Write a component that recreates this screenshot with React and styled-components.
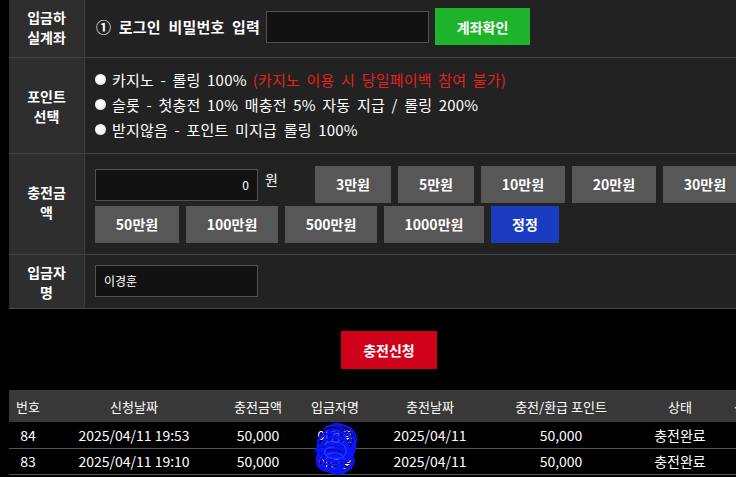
import React from "react";
import styled, { createGlobalStyle } from "styled-components";

const Global = createGlobalStyle`
  html, body {
    margin: 0;
    padding: 0;
    background: #000;
    overflow: hidden;
  }
  body {
    font-family: "Noto Sans CJK KR", "Noto Sans", sans-serif;
    color: #fff;
  }
  * { box-sizing: border-box; }
`;

const Page = styled.div`
  width: 769px;
  padding-left: 9px;
`;

const FormTable = styled.div`
  display: flex;
  flex-direction: column;
  border-bottom: 1px solid #4a4a4a;
`;

const Row = styled.div`
  display: grid;
  grid-template-columns: 76px 1fr;
  height: ${(p) => p.$h}px;
  border-top: ${(p) => (p.$first ? "none" : "1px solid #444")};
`;

const Label = styled.div`
  background: #2e2e2e;
  border-right: 1px solid #3c3c3c;
  display: flex;
  align-items: center;
  justify-content: center;
  text-align: center;
  font-size: 14px;
  font-weight: 700;
  line-height: 20px;
  padding-bottom: ${(p) => p.$pb || 0}px;
`;

const Cell = styled.div`
  background: #222;
  padding: ${(p) => p.$pad || "0 0 0 10px"};
  display: flex;
  align-items: center;
`;

const Inline = styled.div`
  display: flex;
  align-items: center;
  gap: ${(p) => p.$gap || 6}px;
`;

const Strong = styled.span`
  font-size: 15px;
  font-weight: 700;
  word-spacing: 4px;
  letter-spacing: 0.2px;
  white-space: nowrap;
`;

const TextInput = styled.input`
  width: 163px;
  height: 32px;
  background: #121212;
  border: 1px solid #515151;
  color: #fff;
  font-family: inherit;
  font-size: 12px;
  padding: 0 8px;
  text-align: ${(p) => p.$align || "left"};
  outline: none;
`;

const Button = styled.button`
  width: ${(p) => p.$w}px;
  height: ${(p) => p.$h || 37}px;
  padding: 0;
  border: none;
  border-radius: 0;
  background: ${(p) => p.$bg || "#575757"};
  color: #fff;
  font-family: inherit;
  font-size: 14px;
  font-weight: 700;
  white-space: nowrap;
  cursor: pointer;
`;

const Options = styled.div`
  display: flex;
  flex-direction: column;
  gap: 4px;
`;

const Option = styled.label`
  display: flex;
  align-items: center;
  gap: 6px;
  font-size: 15px;
  line-height: 21px;
  word-spacing: 3px;
  letter-spacing: 0.2px;
  white-space: nowrap;
`;

const RadioDot = styled.span`
  width: 11px;
  height: 11px;
  border-radius: 50%;
  background: radial-gradient(circle at 45% 40%, #fff 0%, #f2f2f2 55%, #bdbdbd 100%);
  flex: none;
`;

const Warn = styled.span`
  color: #e4211d;
`;

const AmountGrid = styled.div`
  width: 660px;
  display: flex;
  flex-wrap: wrap;
  column-gap: 7px;
  row-gap: 3px;
  align-items: center;
`;

const AmountField = styled.div`
  display: flex;
  align-items: flex-start;
  gap: 7px;
  margin-right: 30px;
  height: 37px;
  padding-top: 3px;
`;

const Won = styled.span`
  font-size: 14px;
  line-height: 20px;
`;

const SubmitBar = styled.div`
  display: flex;
  justify-content: center;
  padding: 22px 0 21px;
`;

const History = styled.table`
  width: 760px;
  border-collapse: collapse;
  table-layout: fixed;
`;

const Th = styled.th`
  background: #383838;
  height: 32px;
  font-size: 13px;
  font-weight: 400;
  color: #fff;
  text-align: center;
  white-space: nowrap;
  padding: 0;
`;

const Td = styled.td`
  height: 26px;
  font-size: 14px;
  color: #fff;
  text-align: center;
  white-space: nowrap;
  border-bottom: 1px solid #555;
  padding: 0;
  position: relative;
`;

const Name = styled.span`
  color: #fff;
  font-size: 13px;
`;

const Scribble = styled.svg`
  position: absolute;
  left: 17px;
  top: -1px;
  width: 46px;
  height: 56px;
  z-index: 2;
  pointer-events: none;
`;

const widths = [38, 174, 74, 80, 110, 152, 86, 46];
const heads = ["번호", "신청날짜", "충전금액", "입금자명", "충전날짜", "충전/환급 포인트", "상태", "상세"];
const rows = [
  { no: 84, req: "2025/04/11 19:53", amt: "50,000", name: "이경훈", day: "2025/04/11", pt: "50,000", st: "충전완료" },
  { no: 83, req: "2025/04/11 19:10", amt: "50,000", name: "이경훈", day: "2025/04/11", pt: "50,000", st: "충전완료" },
];

const amounts = [
  { t: "3만원", w: 76 },
  { t: "5만원", w: 76 },
  { t: "10만원", w: 84 },
  { t: "20만원", w: 84 },
  { t: "30만원", w: 84 },
  { t: "50만원", w: 84 },
  { t: "100만원", w: 92 },
  { t: "500만원", w: 92 },
  { t: "1000만원", w: 100 },
];

// hand-drawn pen loops hiding the depositor's name
function ScribbleMark() {
  return (
    <Scribble viewBox="0 0 46 56">
      <g fill="none" stroke="#0a14ff" strokeWidth="1.8" strokeLinecap="round" strokeLinejoin="round">
        <path d="M12 8 C22 0 42 4 44 16 C46 28 32 36 20 34 C6 32 2 20 12 12 C20 4 38 10 40 22 C42 34 28 44 16 40 C4 36 4 24 16 18 C26 12 40 20 38 32 C36 44 20 52 8 44 C0 36 8 26 22 26 C34 26 44 36 38 46 C32 54 16 54 12 46" />
        <path d="M6 20 C12 10 32 8 42 18 C46 28 40 42 26 44 C12 46 4 38 6 28 C8 18 24 14 32 20 C40 26 38 38 28 40 C18 42 10 34 14 26" />
        <path d="M3 30 C8 22 24 20 36 26 C44 32 42 46 30 50 C18 54 6 48 6 40 C6 32 20 28 28 32 C36 36 34 48 24 48" />
        <path d="M14 6 C26 2 40 10 38 20 C36 30 20 30 14 22 C10 16 16 8 26 10 C34 12 38 24 30 30" />
        <path d="M22 3 C34 2 44 10 42 24 C40 38 26 52 14 50 C4 48 2 38 8 30" />
        <path d="M8 14 C3 24 6 44 20 52 C30 56 42 48 42 38" />
        <path d="M18 16 C28 12 38 22 34 30 C30 38 16 38 14 30 C12 22 22 20 28 26" />
        <path d="M14 40 C20 34 32 36 32 44 C32 50 22 52 16 46" />
      </g>
      <ellipse cx="23" cy="28" rx="15" ry="16" fill="#0a14ff" opacity="0.7" />
      <g fill="none" stroke="#2a3cff" strokeWidth="1.2">
        <path d="M12 24 C18 18 32 20 34 28 C36 36 26 40 16 36 C10 32 12 26 22 26" />
        <path d="M14 34 C20 30 32 32 32 38" />
      </g>
    </Scribble>
  );
}

export default function App() {
  return (
    <>
      <Global />
      <Page>
        <FormTable>
          <Row $h={57} $first>
            <Label $pb={4}>입금하<br />실계좌</Label>
            <Cell $pad="0 0 4px 11px">
              <Inline $gap={6}>
                <Strong>① 로그인 비밀번호 입력</Strong>
                <TextInput type="password" />
                <Button $w={95} $bg="#1db32b">계좌확인</Button>
              </Inline>
            </Cell>
          </Row>
          <Row $h={96}>
            <Label>포인트<br />선택</Label>
            <Cell $pad="0 0 2px 10px">
              <Options>
                <Option><RadioDot />카지노 - 롤링 100% <Warn>(카지노 이용 시 당일페이백 참여 불가)</Warn></Option>
                <Option><RadioDot />슬롯 - 첫충전 10% 매충전 5% 자동 지급 / 롤링 200%</Option>
                <Option><RadioDot />받지않음 - 포인트 미지급 롤링 100%</Option>
              </Options>
            </Cell>
          </Row>
          <Row $h={101}>
            <Label $pb={4}>충전금<br />액</Label>
            <Cell $pad="0 0 0 10px">
              <AmountGrid>
                <AmountField>
                  <TextInput $align="right" defaultValue="0" />
                  <Won>원</Won>
                </AmountField>
                {amounts.map((a) => (
                  <Button key={a.t} $w={a.w}>{a.t}</Button>
                ))}
                <Button $w={68} $bg="#1a3cc0">정정</Button>
              </AmountGrid>
            </Cell>
          </Row>
          <Row $h={54}>
            <Label>입금자<br />명</Label>
            <Cell $pad="0 0 2px 10px">
              <TextInput defaultValue="이경훈" />
            </Cell>
          </Row>
        </FormTable>

        <SubmitBar>
          <Button $w={96} $h={38} $bg="#d0021b">충전신청</Button>
        </SubmitBar>

        <History>
          <colgroup>
            {widths.map((w, i) => (
              <col key={i} style={{ width: w }} />
            ))}
          </colgroup>
          <thead>
            <tr>
              {heads.map((h) => (
                <Th key={h}>{h}</Th>
              ))}
            </tr>
          </thead>
          <tbody>
            {rows.map((r, i) => (
              <tr key={r.no}>
                <Td>{r.no}</Td>
                <Td>{r.req}</Td>
                <Td>{r.amt}</Td>
                <Td>
                  <Name>{r.name}</Name>
                  {i === 0 && <ScribbleMark />}
                </Td>
                <Td>{r.day}</Td>
                <Td>{r.pt}</Td>
                <Td>{r.st}</Td>
                <Td />
              </tr>
            ))}
          </tbody>
        </History>
      </Page>
    </>
  );
}
